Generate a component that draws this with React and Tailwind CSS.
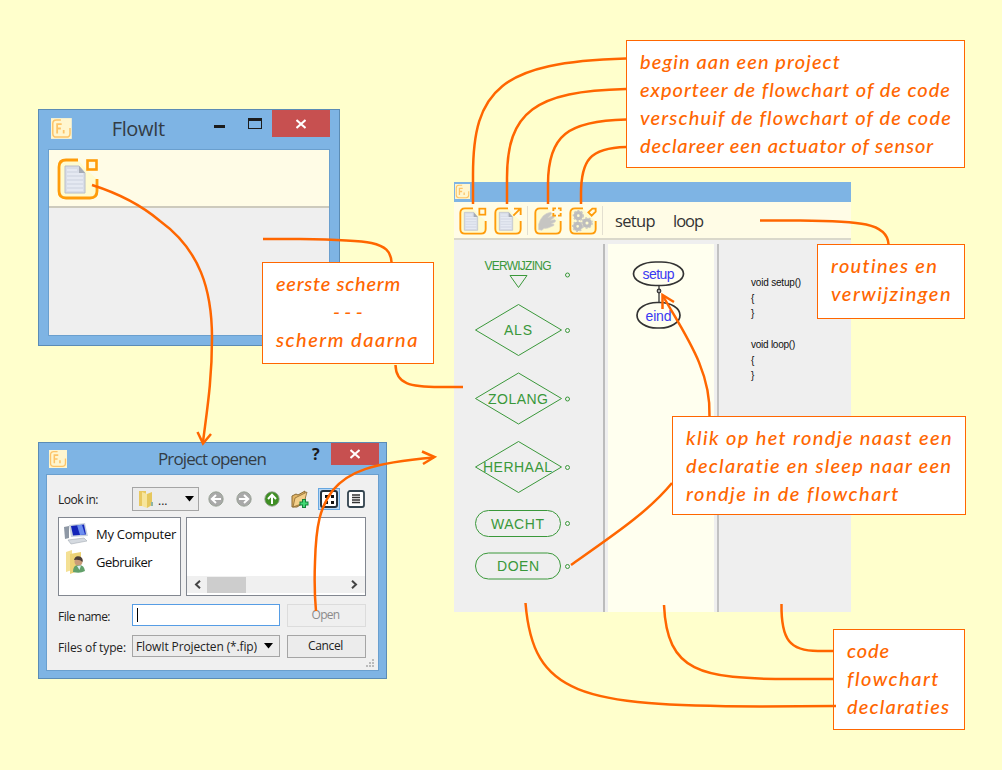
import React, { useLayoutEffect, useRef, useState } from 'react';

// Text that spreads its letters until it takes the given width.
function Fit({ w, className = '', children }) {
  const ref = useRef(null);
  const [gap, setGap] = useState(0);
  useLayoutEffect(() => {
    const natural = ref.current.getBoundingClientRect().width;
    setGap((w - natural) / children.length);
  }, [w, children]);
  return (
    <span ref={ref} className={`inline-block whitespace-pre ${className}`} style={{ letterSpacing: `${gap}px` }}>
      {children}
    </span>
  );
}

const script = "font-['Segoe_Script','Lato',sans-serif] italic font-medium text-[20px] leading-[28px] text-[#ff6600]";
const ui = "font-['Open_Sans','Noto_Sans',sans-serif]";

function Note({ className, lines }) {
  return (
    <div className={`absolute flex flex-col items-start border border-[#ff6600] bg-white pl-[13px] pt-[6px] ${className}`}>
      {lines.map(([t, w, extra]) => (
        <Fit key={t} w={w} className={`${script} ${extra || ''}`}>{t}</Fit>
      ))}
    </div>
  );
}

function Logo({ className }) {
  return (
    <svg viewBox="0 0 21 21" className={className}>
      <rect width="21" height="21" fill="#fff6cf" />
      <path d="M10 1.800H5.500Q1.800 1.800 1.800 5.500V15.500Q1.800 19.200 5.500 19.200H15.500Q19.200 19.200 19.200 15.500V10" fill="none" stroke="#fdc468" strokeWidth="1.500" />
      <path d="M6.200 15.500V6H10.800M6.200 10.500H10" fill="none" stroke="#fdc468" strokeWidth="1.800" />
      <path d="M12.800 12V15.500" stroke="#fdc468" strokeWidth="1.800" />
    </svg>
  );
}

function Frame({ children, className }) {
  return (
    <svg viewBox="0 0 42 42" className={className}>
      <path d="M21 2H9Q2 2 2 9V33Q2 40 9 40H33Q40 40 40 33V21L32 14 26 8Z" fill="#fffbcf" />
      <path d="M21 2H9Q2 2 2 9V33Q2 40 9 40H33Q40 40 40 33V21" fill="none" stroke="#ff9c0a" strokeWidth="2.800" />
      {children}
    </svg>
  );
}

const Page = () => (
  <g>
    <path d="M8 8H22L28 15V35H8Z" fill="#d8dde8" stroke="#b9bec8" />
    <path d="M10 12H20M10 16H26M10 20H26M10 24H26M10 28H26M10 32H26" stroke="#e9edf5" strokeWidth="1.500" />
    <path d="M22 8V15H28Z" fill="#a6abb5" />
  </g>
);

const NewIcon = ({ className }) => (
  <Frame className={className}>
    <Page />
    <rect x="30.500" y="2.500" width="9" height="9" fill="#fffbe0" stroke="#ff9c0a" strokeWidth="2.600" />
  </Frame>
);
const ExportIcon = ({ className }) => (
  <Frame className={className}>
    <Page />
    <path d="M29 13L40 2M30 2.500H40V12" fill="none" stroke="#ff9c0a" strokeWidth="2.800" />
  </Frame>
);
const MoveIcon = ({ className }) => (
  <Frame className={className}>
    <path d="M7 34V26Q9 18 14 13Q18 9 25 8Q28 9 25 12L21 16L28 13Q32 13 30 16L25 20L31 19Q34 20 31 23L26 25L30 26Q31 28 27 29Q20 33 15 32L12 35Z" fill="#c6c5c2" stroke="#d4d2cb" />
    <path d="M29 6V2H33M36 2H40V6M40 9V13H36M33 13H29V9" fill="none" stroke="#ff9c0a" strokeWidth="2.800" />
  </Frame>
);
const GearIcon = ({ className }) => (
  <Frame className={className}>
    <g fill="none" stroke="#bdbdbd" strokeWidth="5">
      <circle cx="14" cy="13" r="4.500" />
      <circle cx="13" cy="29" r="4.500" />
      <circle cx="27" cy="24" r="4.800" />
    </g>
    <g fill="none" stroke="#c9c8c4" strokeWidth="2" strokeDasharray="3 2.500">
      <circle cx="14" cy="13" r="7.500" />
      <circle cx="13" cy="29" r="7.500" />
      <circle cx="27" cy="24" r="7.800" />
    </g>
    <path d="M29 8L35 2.500H40V7L34 13Z" fill="#fffbe0" stroke="#ff9c0a" strokeWidth="2.800" />
  </Frame>
);

function Close({ className }) {
  return (
    <div className={`flex items-center justify-center bg-[#c75050] ${className}`}>
      <svg viewBox="0 0 10 10" className="h-[10px] w-[10px]"><path d="M.5 1L9.500 9M9.500 1L.5 9" stroke="#fff" strokeWidth="2" /></svg>
    </div>
  );
}

function StartWindow() {
  return (
    <div className="absolute left-[38px] top-[109px] flex h-[237px] w-[302px] flex-col border border-[#5b8cb5] bg-[#7eb4e4] px-[9px] pb-[9px]">
      <div className="flex h-[39px] shrink-0 items-start">
        <Logo className="ml-[3px] mt-[8px] h-[21px] w-[21px]" />
        <Fit w={53} className={`${ui} ml-[40px] mt-[5px] text-[20px] leading-[28px] text-[#333c45]`}>FlowIt</Fit>
        <div className="ml-[49px] mt-[15px] h-[3px] w-[11px] bg-[#1c1c1c]" />
        <div className="ml-[23px] mt-[8px] h-[11px] w-[14px] border border-t-[3px] border-[#1c1c1c]" />
        <Close className="ml-[10px] h-[27px] w-[59px]" />
      </div>
      <div className="flex grow flex-col border border-[#6a9fce] bg-[#efefef]">
        <div className="h-[58px] border-b-2 border-[#cdcabd] bg-[#fffce6] pl-[8px] pt-[8px]">
          <NewIcon className="h-[42px] w-[42px]" />
        </div>
      </div>
    </div>
  );
}

const RoundArrow = ({ color, rot }) => (
  <svg viewBox="0 0 16 16" className="h-[16px] w-[16px]">
    <circle cx="8" cy="8" r="7.200" fill={color} stroke="#8f9a8c" strokeWidth=".8" />
    <path transform={`rotate(${rot} 8 8)`} d="M8 13V4M4 8L8 3.800L12 8" fill="none" stroke="#fff" strokeWidth="2" />
  </svg>
);

const FolderIcon = ({ className }) => (
  <svg viewBox="0 0 16 18" className={className}>
    <path d="M1 1H8V16H1Z" fill="#e9c860" />
    <path d="M4 2L9 4V18L4 16Z" fill="#f7e59c" />
    <path d="M9 4L14 2V15L9 18Z" fill="#e6c75d" />
    <path d="M13 12H15V16H13Z" fill="#8eb5a5" />
  </svg>
);

const label = `${ui} text-[12px] leading-[16px] text-[#222]`;
const box = 'border border-[#a5a5a5] bg-[#ececec]';

const Down = () => <svg viewBox="0 0 9 6" className="h-[6px] w-[9px]"><path d="M0 0H9L4.500 5.500Z" fill="#000" /></svg>;

function OpenDialog() {
  return (
    <div className="absolute left-[38px] top-[442px] flex h-[237px] w-[349px] flex-col border border-[#5b8cb5] bg-[#7eb4e4] px-[7px] pb-[7px]">
      <div className="flex h-[31px] shrink-0 items-start">
        <Logo className="ml-[3px] mt-[7px] h-[18px] w-[18px]" />
        <Fit w={108} className={`${ui} ml-[91px] mt-[4px] text-[17px] leading-[24px] text-[#333c45]`}>Project openen</Fit>
        <span className={`${ui} ml-[46px] mt-[1px] w-[9px] text-[16px] font-bold leading-[20px] text-[#1a1a1a]`}>?</span>
        <Close className="ml-[10px] h-[22px] w-[48px]" />
      </div>
      <div className="flex grow flex-col border border-[#6a9fce] bg-[#f0f0f0] pl-[11px] pr-[12px] pt-[12px]">
        <div className="flex h-[24px] items-center">
          <Fit w={40} className={`${label} mt-[2px]`}>Look in:</Fit>
          <div className={`ml-[34px] flex h-[24px] w-[67px] shrink-0 items-center pl-[5px] ${box}`}>
            <FolderIcon className="h-[18px] w-[16px]" />
            <span className={`${label} ml-[4px] mt-[4px] w-[27px]`}>...</span>
            <Down />
          </div>
          <div className="ml-[9px] flex items-center gap-[12px]">
            <RoundArrow color="#a9a9a9" rot={-90} />
            <RoundArrow color="#a9a9a9" rot={90} />
            <RoundArrow color="#3f8f24" rot={0} />
          </div>
          <svg viewBox="0 0 18 18" className="ml-[11px] h-[18px] w-[18px]">
            <path d="M1 17V6L5 4L7 5L14 1V12L6 17Z" fill="#e2b566" stroke="#8a6a33" />
            <path d="M4 8L16 2L13 13L2 17Z" fill="#f3cf8a" stroke="#8a6a33" strokeWidth=".8" />
            <path d="M13 9V18M8.500 13.500H17.500" stroke="#14803c" strokeWidth="4" />
            <path d="M13 10V17M9.500 13.500H16.500" stroke="#41d873" strokeWidth="2" />
          </svg>
          <div className="ml-[9px] flex h-[22px] w-[22px] items-center justify-center border border-[#67a7e0] bg-[#b8d8f5]">
            <svg viewBox="0 0 18 18" className="h-[18px] w-[18px]">
              <rect x="1" y="1" width="16" height="16" rx="2" fill="#fff" stroke="#23313d" strokeWidth="2" />
              <path d="M5 5H8V8H5ZM11 5H14V8H11ZM5 11H8V14H5ZM11 11H14V14H11Z" fill="#111" />
            </svg>
          </div>
          <svg viewBox="0 0 18 18" className="ml-[7px] h-[18px] w-[18px]">
            <rect x="1" y="1" width="16" height="16" rx="2" fill="#fff" stroke="#33444f" strokeWidth="1.800" />
            <path d="M5 5H13M5 7.500H13M5 10H13M5 12.500H13" stroke="#333" strokeWidth="1.300" />
          </svg>
        </div>
        <div className="mt-[6px] flex h-[79px] gap-[5px]">
          <div className="w-[123px] border border-[#828790] bg-white pl-[5px] pt-[2px]">
            <div className="flex h-[28px] items-center gap-[7px]">
              <svg viewBox="0 0 25 22" className="h-[22px] w-[25px]">
                <path d="M0 4L5 3V15L1 16Z" fill="#8e98a5" />
                <path d="M5 2L21 0L24 13L7 14Z" fill="#c9d2dd" />
                <path d="M7 3L20 1.500L22 11.500L9 12.500Z" fill="#1424b8" />
                <path d="M13 2.300L18 1.700L21 11.500L16 12Z" fill="#6d8ff0" />
                <path d="M4 17L20 15L23 18L7 21Z" fill="#d5dae0" stroke="#a4abb3" strokeWidth=".6" />
              </svg>
              <Fit w={80} className={`${ui} text-[13px] leading-[18px] text-[#111]`}>My Computer</Fit>
            </div>
            <div className="flex h-[28px] items-center gap-[7px]">
              <svg viewBox="0 0 25 24" className="h-[24px] w-[25px]">
                <path d="M2 2L8 0V20L2 22Z" fill="#f4e094" />
                <path d="M6 4L17 2V20L6 24Z" fill="#ecd276" />
                <path d="M9 22Q9 15 14 15Q20 14 21 21Q16 24 9 22Z" fill="#62a06a" />
                <circle cx="14.500" cy="11.500" r="4" fill="#c99b78" />
                <path d="M10 10Q11 5 16 6.500Q19.500 8 18.500 12Q16 9 10 10Z" fill="#4b3d38" />
                <path d="M13 16L15.500 20L17 15.500Z" fill="#d8eef5" />
              </svg>
              <Fit w={56} className={`${ui} text-[13px] leading-[18px] text-[#111]`}>Gebruiker</Fit>
            </div>
          </div>
          <div className="flex w-[181px] flex-col justify-end border border-[#828790] bg-white">
            <div className="mb-[2px] flex h-[17px] items-center bg-[#f0f0f0] px-[7px]">
              <svg viewBox="0 0 7 9" className="h-[9px] w-[7px]"><path d="M6 .8L2 4.500L6 8.200" fill="none" stroke="#444" strokeWidth="2" /></svg>
              <div className="ml-[6px] h-[16px] w-[39px] bg-[#cdcdcd]" />
              <svg viewBox="0 0 7 9" className="ml-auto h-[9px] w-[7px]"><path d="M1 .8L5 4.500L1 8.200" fill="none" stroke="#444" strokeWidth="2" /></svg>
            </div>
          </div>
        </div>
        <div className="mt-[7px] flex h-[24px] items-center">
          <div className="w-[74px] shrink-0"><Fit w={52} className={label}>File name:</Fit></div>
          <div className="flex h-[22px] w-[148px] items-center border border-[#569de5] bg-white pl-[4px]">
            <div className="h-[14px] w-px bg-black" />
          </div>
          <div className="ml-[7px] flex h-[23px] w-[79px] items-center justify-center border border-[#dcdcdc] bg-[#efefef]">
            <Fit w={28} className={`${ui} -ml-[2px] text-[12px] leading-[16px] text-[#8b8b8b]`}>Open</Fit>
          </div>
        </div>
        <div className="mt-[7px] flex h-[24px] items-center">
          <div className="w-[74px] shrink-0"><Fit w={68} className={label}>Files of type:</Fit></div>
          <div className={`flex h-[22px] w-[148px] items-center justify-between pl-[3px] pr-[6px] ${box}`}>
            <Fit w={121} className={`${label} mt-[2px]`}>FlowIt Projecten (*.fip)</Fit>
            <Down />
          </div>
          <div className={`ml-[7px] flex h-[23px] w-[79px] items-center justify-center ${box}`}>
            <Fit w={35} className={`${label} -ml-[2px]`}>Cancel</Fit>
          </div>
        </div>
        <svg viewBox="0 0 9 9" className="-mr-[9px] mt-px h-[9px] w-[9px] self-end">
          <path d="M6 0H8V2H6ZM3 3H5V5H3ZM6 3H8V5H6ZM0 6H2V8H0ZM3 6H5V8H3ZM6 6H8V8H6Z" fill="#bbb" />
        </svg>
      </div>
    </div>
  );
}

const diamonds = [['ALS', 330, 504, 28], ['ZOLANG', 398.5, 488, 60], ['HERHAAL', 467, 483, 69]];
const pills = [['WACHT', 523.5, 491, 53], ['DOEN', 566, 497, 42]];

function Declarations() {
  return (
    <svg viewBox="454 240 149 372" className="h-[372px] w-[149px] shrink-0 font-['Liberation_Sans',Arial,sans-serif] text-[14px]">
      <g fill="none" stroke="#3a983a">
        <path d="M510 275.500H527L518.500 287.500Z" />
        {diamonds.map(([t, y]) => <path key={t} d={`M475.500 ${y}L518.500 ${y - 25.5}L561.500 ${y}L518.500 ${y + 25.5}Z`} />)}
        {pills.map(([t, y]) => <rect key={t} x="475.500" y={y - 13} width="85" height="26" rx="13" />)}
        {[275, 330.5, 399, 467.5, 523.5, 566.5].map((y) => <circle key={y} cx="567.500" cy={y} r="2" />)}
      </g>
      <g fill="#3a983a">
        <text x="484.500" y="270" fontSize="12" textLength="67">VERWIJZING</text>
        {[...diamonds, ...pills].map(([t, y, x, w]) => <text key={t} x={x} y={y + 5} textLength={w}>{t}</text>)}
      </g>
    </svg>
  );
}

function Flowchart() {
  return (
    <svg viewBox="608 244 106 368" className="h-[368px] w-[106px] bg-[#ffffef] font-['Liberation_Sans',Arial,sans-serif] text-[14px]">
      <g fill="none" stroke="#333" strokeWidth="1.700">
        <path d="M659 286V302" strokeWidth="1.300" />
        <rect x="633.500" y="262" width="50" height="23.500" rx="22" ry="11.750" />
        <rect x="637" y="302.500" width="43" height="25.500" rx="20" ry="12.750" />
        <circle cx="659" cy="291" r="1.800" fill="#aaa" strokeWidth="1.200" />
      </g>
      <g fill="#3a3af2">
        <text x="642.500" y="279" textLength="32">setup</text>
        <text x="645.500" y="321" textLength="26">eind</text>
      </g>
    </svg>
  );
}

const code = [['void setup()', 50], ['{', 3], ['}', 3], [' ', 3], ['void loop()', 44], ['{', 3], ['}', 3]];

function MainWindow() {
  return (
    <div className="absolute left-[454px] top-[182px] flex h-[430px] w-[397px] flex-col bg-[#efefef]">
      <div className="h-[20px] shrink-0 bg-[#7eb4e4] pl-[1px] pt-[2px]">
        <Logo className="h-[15px] w-[15px]" />
      </div>
      <div className="flex h-[38px] shrink-0 items-center border-b-2 border-[#dad8cb] bg-[#fffce6] pl-[5px]">
        <NewIcon className="mt-[2px] h-[28px] w-[28px]" />
        <ExportIcon className="ml-[7px] mt-[2px] h-[28px] w-[28px]" />
        <div className="ml-[5px] h-[29px] w-px bg-[#e3dfd0]" />
        <MoveIcon className="ml-[6px] mt-[2px] h-[28px] w-[28px]" />
        <GearIcon className="ml-[7px] mt-[2px] h-[28px] w-[28px]" />
        <div className="ml-[5px] h-[29px] w-px bg-[#e3dfd0]" />
        <Fit w={40} className={`${ui} ml-[12px] mt-[2px] text-[16.500px] leading-[22px] text-[#333]`}>setup</Fit>
        <Fit w={30} className={`${ui} ml-[18px] mt-[2px] text-[16.500px] leading-[22px] text-[#333]`}>loop</Fit>
      </div>
      <div className="flex grow items-end">
        <Declarations />
        <div className="h-[368px] w-[2px] bg-[#bcbcbc]" />
        <div className="ml-[3px]"><Flowchart /></div>
        <div className="ml-[3px] h-[368px] w-[2px] bg-[#c2c2c2]" />
        <div className="ml-[32px] flex h-[337px] flex-col items-start">
          {code.map(([t, w], i) => (
            <Fit key={i} w={w} className="h-[15.5px] font-['Liberation_Sans',Arial,sans-serif] text-[10px] leading-[15.5px] text-[#111]">{t}</Fit>
          ))}
        </div>
      </div>
    </div>
  );
}

function Connectors() {
  return (
    <svg viewBox="0 0 1002 770" className="pointer-events-none absolute left-0 top-0 h-[770px] w-[1002px]">
      <g fill="none" stroke="#ff6600" strokeWidth="2.500">
        <path d="M92 185Q133 198 160 221C200 250 212 290 212 338C212 380 207 410 203 442" />
        <path d="M197.500 432L203 443.500L211 434" />
        <path d="M263 239H300C370 240 390 241 391.500 262" />
        <path d="M395.500 365C396 384 410 387 440 387H463" />
        <path d="M316 611C314 590 314.500 575 315 562C316 525 320 507 333 490C348 472 370 463 434 457.500" />
        <path d="M422 451.500L434.500 457L423 464" />
        <path d="M626 58.500C500 62 473 90 473 175V204" />
        <path d="M626 89C535 91 507 112 507 178V204" />
        <path d="M626 119.500C568 121 548 135 548 184V204" />
        <path d="M626 147C590 148 581 160 581 194V204" />
        <path d="M760 220.500H800C860 221 887 223 888.500 244" />
        <path d="M709.500 416C711 370 685 335 663 296" />
        <path d="M662.500 309V295L674 302" />
        <path d="M571 565C615 534 648 512 672 483" />
        <path d="M525.500 603C533 695 580 706 760 706.500L836 706" />
        <path d="M664 605C667 672 700 679 790 679H833" />
        <path d="M781.500 604C781 640 790 651 818 651H833" />
      </g>
    </svg>
  );
}

export default function App() {
  return (
    <div className="relative h-[770px] w-[1002px] overflow-hidden bg-[#ffffcc]">
      <StartWindow />
      <OpenDialog />
      <MainWindow />
      <Note className="left-[626px] top-[40px] h-[128px] w-[339px]" lines={[
        ['begin aan een project', 201], ['exporteer de flowchart of de code', 311],
        ['verschuif de flowchart of de code', 312], ['declareer een actuator of sensor', 294]]} />
      <Note className="left-[817px] top-[244px] h-[75px] w-[148px]" lines={[['routines en', 107], ['verwijzingen', 121]]} />
      <Note className="left-[672px] top-[416px] h-[99px] w-[294px]" lines={[
        ['klik op het rondje naast een', 267], ['declaratie en sleep naar een', 266], ['rondje in de flowchart', 214]]} />
      <Note className="left-[833px] top-[629px] h-[101px] w-[132px]" lines={[['code', 43], ['flowchart', 93], ['declaraties', 103]]} />
      <Note className="left-[262px] top-[262px] h-[102px] w-[172px]" lines={[
        ['eerste scherm', 125], ['---', 34, 'ml-[57px] font-bold'], ['scherm daarna', 143]]} />
      <Connectors />
    </div>
  );
}
